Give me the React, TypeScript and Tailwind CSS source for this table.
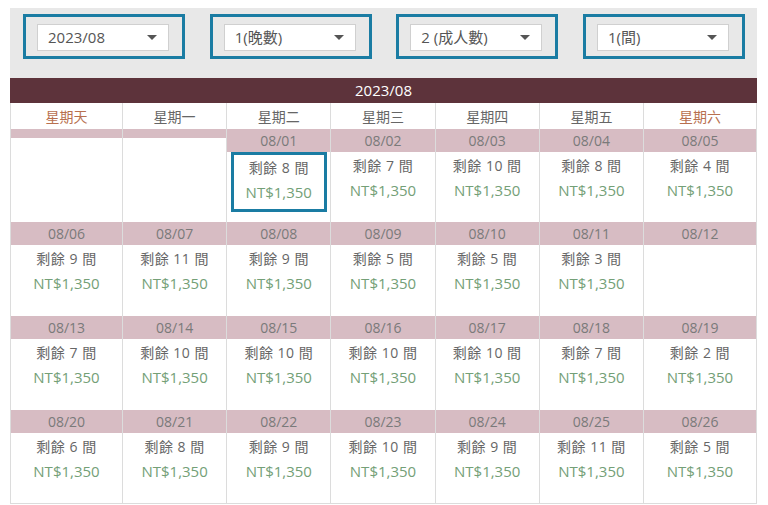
const font = {
  fontFamily: '"Open Sans", "Noto Sans CJK TC", sans-serif',
};

const selects = [
  { label: "2023/08" },
  { label: "1(晚數)" },
  { label: "2 (成人數)" },
  { label: "1(間)" },
];

const weekdays = ["星期天", "星期一", "星期二", "星期三", "星期四", "星期五", "星期六"];

type Day = { date: string; left: number } | null;

const rows: Day[][] = [
  [null, null, { date: "08/01", left: 8 }, { date: "08/02", left: 7 }, { date: "08/03", left: 10 }, { date: "08/04", left: 8 }, { date: "08/05", left: 4 }],
  [{ date: "08/06", left: 9 }, { date: "08/07", left: 11 }, { date: "08/08", left: 9 }, { date: "08/09", left: 5 }, { date: "08/10", left: 5 }, { date: "08/11", left: 3 }, { date: "08/12", left: 0 }],
  [{ date: "08/13", left: 7 }, { date: "08/14", left: 10 }, { date: "08/15", left: 10 }, { date: "08/16", left: 10 }, { date: "08/17", left: 10 }, { date: "08/18", left: 7 }, { date: "08/19", left: 2 }],
  [{ date: "08/20", left: 6 }, { date: "08/21", left: 8 }, { date: "08/22", left: 9 }, { date: "08/23", left: 10 }, { date: "08/24", left: 9 }, { date: "08/25", left: 11 }, { date: "08/26", left: 5 }],
];

function SelectBox({ label }: { label: string }) {
  return (
    <div className="w-[162px] h-[45px] border-[3px] border-[#1a7ca3] pl-[11px] pt-[7px]">
      <div className="w-[132px] h-[27px] bg-white border border-[#d0d0d0] flex items-center justify-between pl-[10px] pr-[11px]">
        <span className="text-[15px] text-[#555]">{label}</span>
        <svg width="10" height="6" viewBox="0 0 10 6">
          <path d="M0 0 L10 0 L5 5 Z" fill="#555" />
        </svg>
      </div>
    </div>
  );
}

function Cell({ day, col, short }: { day: Day; col: number; short: boolean }) {
  const last = col === 6;
  const border = last ? "" : "border-r border-[#dcdcdc]";
  const body = short ? "h-[70px]" : "h-[71px]";
  if (!day) {
    return (
      <div className={`flex flex-col ${border}`}>
        <div className="h-[9px] bg-[#d7bcc3]" />
        <div className="h-[84px] bg-white" />
      </div>
    );
  }
  const highlight = day.date === "08/01";
  return (
    <div className={`flex flex-col ${border}`}>
      <div className="h-[23px] bg-[#d7bcc3] flex items-center justify-center text-[14px] text-[#7a7a7a]">
        {day.date}
      </div>
      <div className={`${body} bg-white flex flex-col items-center`}>
        {day.left > 0 && (
          <div
            className={`flex flex-col items-center ${
              highlight ? "w-[96px] h-[60px] border-[3px] border-[#1a7ca3]" : "pt-[1px]"
            }`}
          >
            <div className="text-[14px] leading-[25px] text-[#666] tracking-[0.5px]">剩餘 {day.left} 間</div>
            <div className="text-[15px] leading-[25px] text-[#74a077]">NT$1,350</div>
          </div>
        )}
      </div>
    </div>
  );
}

export default function App() {
  return (
    <div className="w-[768px] h-[505px] bg-white pt-[8px] pl-[10px] overflow-hidden" style={font}>
      <div className="w-[747px]">
        <div className="h-[70px] bg-[#e8e8e8] flex justify-between pl-[13px] pr-[12px] pt-[6px]">
          {selects.map((s) => (
            <SelectBox key={s.label} label={s.label} />
          ))}
        </div>
        <div className="h-[25px] bg-[#5d333b] flex items-center justify-center text-white text-[15px]">
          2023/08
        </div>
        <div className="border-x border-b border-[#dcdcdc]">
          <div className="grid grid-cols-[112px_repeat(5,1fr)_112px] h-[26px] bg-white">
            {weekdays.map((w, i) => (
              <div
                key={w}
                className={`flex items-center justify-center text-[14px] ${
                  i === 0 || i === 6 ? "text-[#b8704f]" : "text-[#666]"
                } ${i === 6 ? "" : "border-r border-[#dcdcdc]"}`}
              >
                {w}
              </div>
            ))}
          </div>
          {rows.map((r, ri) => (
            <div key={ri} className="grid grid-cols-[112px_repeat(5,1fr)_112px]">
              {r.map((d, ci) => (
                <Cell key={ci} day={d} col={ci} short={ri === 0 || ri === rows.length - 1} />
              ))}
            </div>
          ))}
        </div>
      </div>
    </div>
  );
}
